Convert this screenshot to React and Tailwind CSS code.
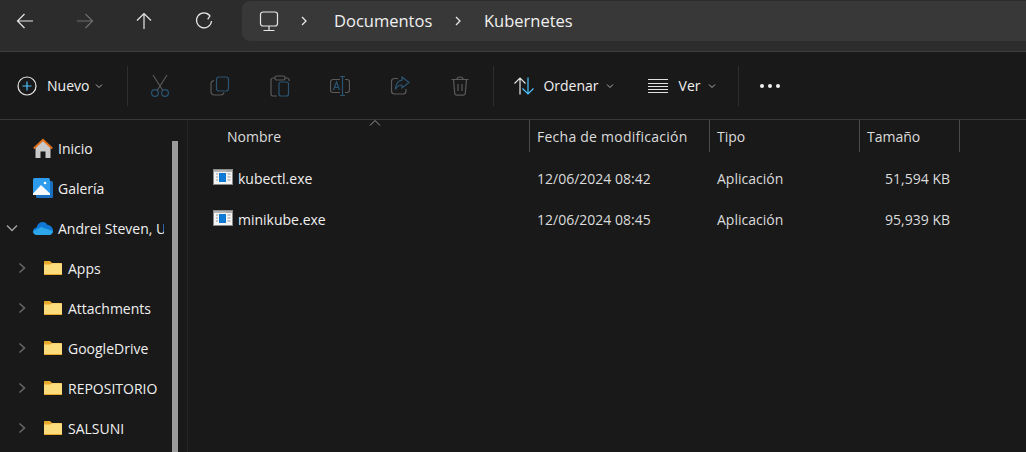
const font = { fontFamily: '"Open Sans", "Noto Sans", sans-serif' }

const Line = ({ d, className = 'text-[#e6e6e6]', w = 20, sw = 1.2 }) => (
  <svg width={w} height={w} viewBox="0 0 20 20" fill="none" stroke="currentColor" strokeWidth={sw} className={className}>
    <path d={d} />
  </svg>
)

const Chevron = ({ className = '' }) => (
  <svg width="8" height="6" viewBox="0 0 8 6" fill="none" stroke="#b0b0b0" strokeWidth="1" className={className}>
    <path d="M1 1.500l3 3 3-3" />
  </svg>
)

const Cut = () => (
  <svg width="20" height="24" viewBox="0 0 20 24" fill="none" strokeWidth="1.2">
    <path d="M3 1l9.500 15M17 1L7.500 16" stroke="#5a5a5a" />
    <circle cx="5" cy="19" r="3.400" stroke="#2b5573" />
    <circle cx="15" cy="19" r="3.400" stroke="#2b5573" />
  </svg>
)

const Copy = () => (
  <svg width="20" height="20" viewBox="0 0 20 20" fill="none" strokeWidth="1.2">
    <path d="M4 4.500C2 5 1 6 1 7.500v8C1 17.500 2.500 19 4.500 19h6.500c1.500 0 2.500-1 3-2.500" stroke="#5a5a5a" />
    <rect x="6.500" y="1" width="12" height="14" rx="2.500" stroke="#2b5573" />
  </svg>
)

const Paste = () => (
  <svg width="20" height="22" viewBox="0 0 20 22" fill="none" strokeWidth="1.2">
    <path d="M5 3H3C1.800 3 1 4 1 5v13.500C1 20 2 21 3 21h4M15 3h2c1 0 2 1 2 2v1" stroke="#5a5a5a" />
    <rect x="5" y="1" width="10" height="4" rx="1.500" stroke="#5a5a5a" />
    <rect x="9" y="7" width="9.500" height="14" rx="2" stroke="#2b5573" />
  </svg>
)

const Rename = () => (
  <svg width="20" height="20" viewBox="0 0 20 20" fill="none" strokeWidth="1.2">
    <path d="M10 3.500H3C1.500 3.500.5 4.500.5 6v8c0 1.500 1 2.500 2.500 2.500h7M15 3.500h2c1.500 0 2.500 1 2.500 2.500v8c0 1.500-1 2.500-2.500 2.500h-2" stroke="#5a5a5a" />
    <path d="M10 .5h5M12.500.5v19M10 19.500h5M3.500 14l3-8 3 8M4.500 11.500h4" stroke="#2b5573" />
  </svg>
)

const Share = () => (
  <svg width="20" height="20" viewBox="0 0 20 20" fill="none" strokeWidth="1.2">
    <path d="M8 2.500H4.500C2.500 2.500 1.500 3.500 1.500 5.500v9.500c0 2 1 3 3 3h8.500c2 0 3-1 3-3v-2" stroke="#5a5a5a" />
    <path d="M12 1l7 5.500-7 5.500V9C9 9 7 10.500 5.500 13.500 5.500 8.500 8 4.500 12 4.200z" stroke="#2b5573" />
  </svg>
)

const Trash = () => (
  <svg width="18" height="20" viewBox="0 0 18 20" fill="none" stroke="#5a5a5a" strokeWidth="1.2">
    <path d="M.5 3.500h17M6 3.500C6 2 7 1 9 1s3 1 3 2.500M2.500 3.500l1.200 13.500c.1 1.300 1 2.200 2.300 2.200h6c1.300 0 2.200-.9 2.300-2.200l1.200-13.500M7 8v7M11 8v7" />
  </svg>
)

const Sort = () => (
  <svg width="22" height="20" viewBox="0 0 22 20" fill="none" strokeWidth="1.200">
    <path d="M7 18.500V2M1.500 7.500L7 2l5.500 5.500" stroke="#e6e6e6" />
    <path d="M15 1.500V18M9.500 12.500L15 18l5.500-5.500" stroke="#4cc2ff" />
  </svg>
)

const ListIcon = () => (
  <svg width="20" height="14" viewBox="0 0 20 14" fill="none" stroke="#e0e0e0" strokeWidth="1">
    <path d="M0 .5h20M0 4.500h20M0 7.500h20M0 10.500h20M0 13.500h20" />
  </svg>
)

const Home = () => (
  <svg width="20" height="20" viewBox="0 0 20 20" className="shrink-0">
    <path d="M2.500 9.500L10 2.500l7.500 7V20h-5v-6.500h-5V20h-5z" fill="#c9c9c9" />
    <path d="M.8 10.500L10 1.800l9.200 8.700" fill="none" stroke="#e1711c" strokeWidth="2" />
  </svg>
)

const Gallery = () => (
  <svg width="20" height="20" viewBox="0 0 20 20" className="shrink-0">
    <rect x="3" y="3" width="17" height="17" rx="1.500" fill="#1b6fc0" />
    <rect x="0" y="0" width="17" height="17" rx="1.500" fill="#2d9cee" />
    <path d="M0 15.500L8 7l9 8.500V17H0z" fill="#f5f7fa" />
    <circle cx="12" cy="5" r="1.300" fill="#fff" />
  </svg>
)

const Cloud = () => (
  <svg width="20" height="14" viewBox="0 0 20 14" className="shrink-0">
    <path d="M4 14C1.500 14 0 12.300 0 10.300 0 8.200 1.500 6.600 3.500 6.400 4.500 3 6.800 1 9.500 1c2.300 0 4.100 1.200 5 3 3 0 5.500 2.500 5.500 5.500 0 2.500-2 4.500-4 4.500z" fill="#0f78d4" />
    <path d="M4 14C1.500 14 0 12.300 0 10.300L8 6l12 4c0 2-2 4-4 4z" fill="#2ea6ea" />
  </svg>
)

const Folder = () => (
  <svg width="18" height="14" viewBox="0 0 18 14" className="shrink-0">
    <path d="M0 1c0-.6.4-1 1-1h5l2 2h9c.6 0 1 .4 1 1v10c0 .6-.4 1-1 1H1c-.6 0-1-.4-1-1z" fill="#e8a92b" />
    <path d="M0 3.500h6.500L8 2.200h9c.6 0 1 .4 1 1V13c0 .6-.4 1-1 1H1c-.6 0-1-.4-1-1z" fill="#fbdc7c" />
    <path d="M0 13h18c0 .6-.4 1-1 1H1c-.6 0-1-.4-1-1z" fill="#e8a92b" />
  </svg>
)

const ExeIcon = () => (
  <svg width="20" height="16" viewBox="0 0 20 16" className="shrink-0 -mt-[3px]">
    <rect x="0" y="0" width="20" height="16" fill="#8a8a8a" />
    <rect x="1" y="3" width="18" height="12" fill="#f4f4f4" />
    <rect x="1" y="1" width="18" height="2" fill="#b5b5b5" />
    <rect x="6" y="4" width="7" height="9" fill="#0f7ad6" />
    <path d="M3 5h2M3 8h2M3 11h2M14.500 5h3M14.500 8h3M14.500 11h3M13 2h5" stroke="#9a9a9a" strokeWidth="1" />
  </svg>
)

const navItems = [
  { label: 'Inicio', icon: <Home /> },
  { label: 'Galería', icon: <Gallery /> },
  { label: 'Andrei Steven, UNI', icon: <Cloud />, open: true },
  { label: 'Apps', folder: true },
  { label: 'Attachments', folder: true },
  { label: 'GoogleDrive', folder: true },
  { label: 'REPOSITORIO', folder: true },
  { label: 'SALSUNI', folder: true },
]

const files = [
  { name: 'kubectl.exe', date: '12/06/2024 08:42', type: 'Aplicación', size: '51,594 KB' },
  { name: 'minikube.exe', date: '12/06/2024 08:45', type: 'Aplicación', size: '95,939 KB' },
]

const ToolSlot = ({ children }) => <div className="w-[60px] flex items-center justify-center">{children}</div>

const Sep = () => <div className="w-px h-10 bg-[#2e2e2e]" />

export default function App() {
  return (
    <div style={font} className="w-[1026px] h-[452px] overflow-hidden bg-[#191919] text-[#f0f0f0] text-[14px] flex flex-col">
      {/* address bar */}
      <div className="h-[52px] shrink-0 bg-[#2c2c2c] border-b border-[#3d3d3d] flex items-start">
        <div className="flex items-center h-[42px] pl-[15px] gap-[39.500px] w-[242px]">
          <Line d="M18 10H2.500M9.500 3l-7 7 7 7" />
          <Line d="M2 10h15.500M10.500 3l7 7-7 7" className="text-[#6e6e6e]" />
          <Line d="M10 18V2.500M3 9.500l7-7 7 7" />
          <Line d="M16 4.800A7.500 7.500 0 1 0 17.500 10M12.500 2.500L16 4.800l-2.300 3.500" />
        </div>
        <div className="flex-1 h-[40px] mt-px bg-[#383838] rounded-l-lg flex items-center text-[16.500px]">
          <svg width="20" height="21" viewBox="0 0 20 21" fill="none" stroke="#e6e6e6" strokeWidth="1.200" className="ml-[17px]">
            <rect x="1.500" y="1" width="17" height="14" rx="2.500" />
            <path d="M10 15v4M4.500 19.500h11" />
          </svg>
          <svg width="8" height="12" viewBox="0 0 8 12" fill="none" stroke="#e6e6e6" strokeWidth="1.300" className="ml-[21px]">
            <path d="M2 2l4 4-4 4" />
          </svg>
          <span className="ml-[26px] w-[120px]">Documentos</span>
          <svg width="8" height="12" viewBox="0 0 8 12" fill="none" stroke="#e6e6e6" strokeWidth="1.300">
            <path d="M2 2l4 4-4 4" />
          </svg>
          <span className="ml-[22px]">Kubernetes</span>
        </div>
      </div>

      {/* toolbar */}
      <div className="h-[68px] shrink-0 border-b border-[#3a3a3a] flex items-center">
        <svg width="20" height="20" viewBox="0 0 20 20" fill="none" strokeWidth="1.200" className="ml-[17px]">
          <circle cx="10" cy="10" r="9" stroke="#e6e6e6" />
          <path d="M10 5.500v9M5.500 10h9" stroke="#4cc2ff" />
        </svg>
        <span className="ml-[10px]">Nuevo</span>
        <Chevron className="ml-[6px]" />
        <div className="ml-[24px]"><Sep /></div>
        <div className="flex ml-[2px]">
          <ToolSlot><Cut /></ToolSlot>
          <ToolSlot><Copy /></ToolSlot>
          <ToolSlot><Paste /></ToolSlot>
          <ToolSlot><Rename /></ToolSlot>
          <ToolSlot><Share /></ToolSlot>
          <ToolSlot><Trash /></ToolSlot>
        </div>
        <div className="ml-[3px]"><Sep /></div>
        <div className="ml-[19px]"><Sort /></div>
        <span className="ml-[8px]">Ordenar</span>
        <Chevron className="ml-[7px]" />
        <div className="ml-[34px]"><ListIcon /></div>
        <span className="ml-[11px]">Ver</span>
        <Chevron className="ml-[8px]" />
        <div className="ml-[22px]"><Sep /></div>
        <div className="ml-[21px] flex gap-[4px]">
          <span className="w-1 h-1 rounded-full bg-[#f0f0f0]" />
          <span className="w-1 h-1 rounded-full bg-[#f0f0f0]" />
          <span className="w-1 h-1 rounded-full bg-[#f0f0f0]" />
        </div>
      </div>

      <div className="flex-1 flex min-h-0">
        {/* sidebar */}
        <div className="w-[188px] shrink-0 flex border-r border-[#262626] min-h-0">
          <div className="w-[172px] shrink-0 pt-2">
            {navItems.map((item) => (
              <div key={item.label} className="h-10 flex items-center relative">
                {item.folder ? (
                  <div className="flex items-center pl-[18px]">
                    <svg width="9" height="12" viewBox="0 0 9 12" fill="none" stroke="#6a6a6a" strokeWidth="1.500">
                      <path d="M1.500 1.500l5 4.500-5 4.500" />
                    </svg>
                    <div className="ml-[17px]"><Folder /></div>
                    <span className="ml-[6px] whitespace-nowrap">{item.label}</span>
                  </div>
                ) : (
                  <div className="flex items-center pl-[33px] gap-[5px] w-[164px] overflow-hidden">
                    {item.icon}
                    <span className="whitespace-nowrap">{item.label}</span>
                  </div>
                )}
                {item.open && (
                  <svg width="12" height="8" viewBox="0 0 12 8" fill="none" stroke="#a0a0a0" strokeWidth="1.500" className="absolute left-[6px] top-[16px]">
                    <path d="M1 1.500l5 5 5-5" />
                  </svg>
                )}
              </div>
            ))}
          </div>
          <div className="w-[6px] mt-[21px] bg-[#9b9b9b]" />
        </div>

        {/* file list */}
        <div className="flex-1 relative min-w-0">
          <svg width="12" height="6" viewBox="0 0 12 6" fill="none" stroke="#9a9a9a" className="absolute left-[181px] top-0">
            <path d="M1 5.500l5-5 5 5" />
          </svg>
          <div className="flex h-8 text-[#dcdcdc]">
            <div className="w-[342px] border-r border-[#4a4a4a] pl-[39px] flex items-center">Nombre</div>
            <div className="w-[180px] border-r border-[#4a4a4a] pl-[7px] flex items-center tracking-[0.25px]">Fecha de modificación</div>
            <div className="w-[150px] border-r border-[#4a4a4a] pl-[7px] flex items-center">Tipo</div>
            <div className="w-[100px] border-r border-[#4a4a4a] pl-[7px] flex items-center">Tamaño</div>
          </div>
          <div className="pt-[6px]">
            {files.map((f) => (
              <div key={f.name} className="flex h-[41px] items-center">
                <div className="w-[342px] pl-[25px] flex items-center gap-[5px]">
                  <ExeIcon />
                  <span>{f.name}</span>
                </div>
                <div className="w-[180px] pl-[7px] text-[#dcdcdc]">{f.date}</div>
                <div className="w-[150px] pl-[7px] text-[#dcdcdc]">{f.type}</div>
                <div className="w-[100px] pr-[10px] text-right text-[#dcdcdc]">{f.size}</div>
              </div>
            ))}
          </div>
        </div>
      </div>
    </div>
  )
}
